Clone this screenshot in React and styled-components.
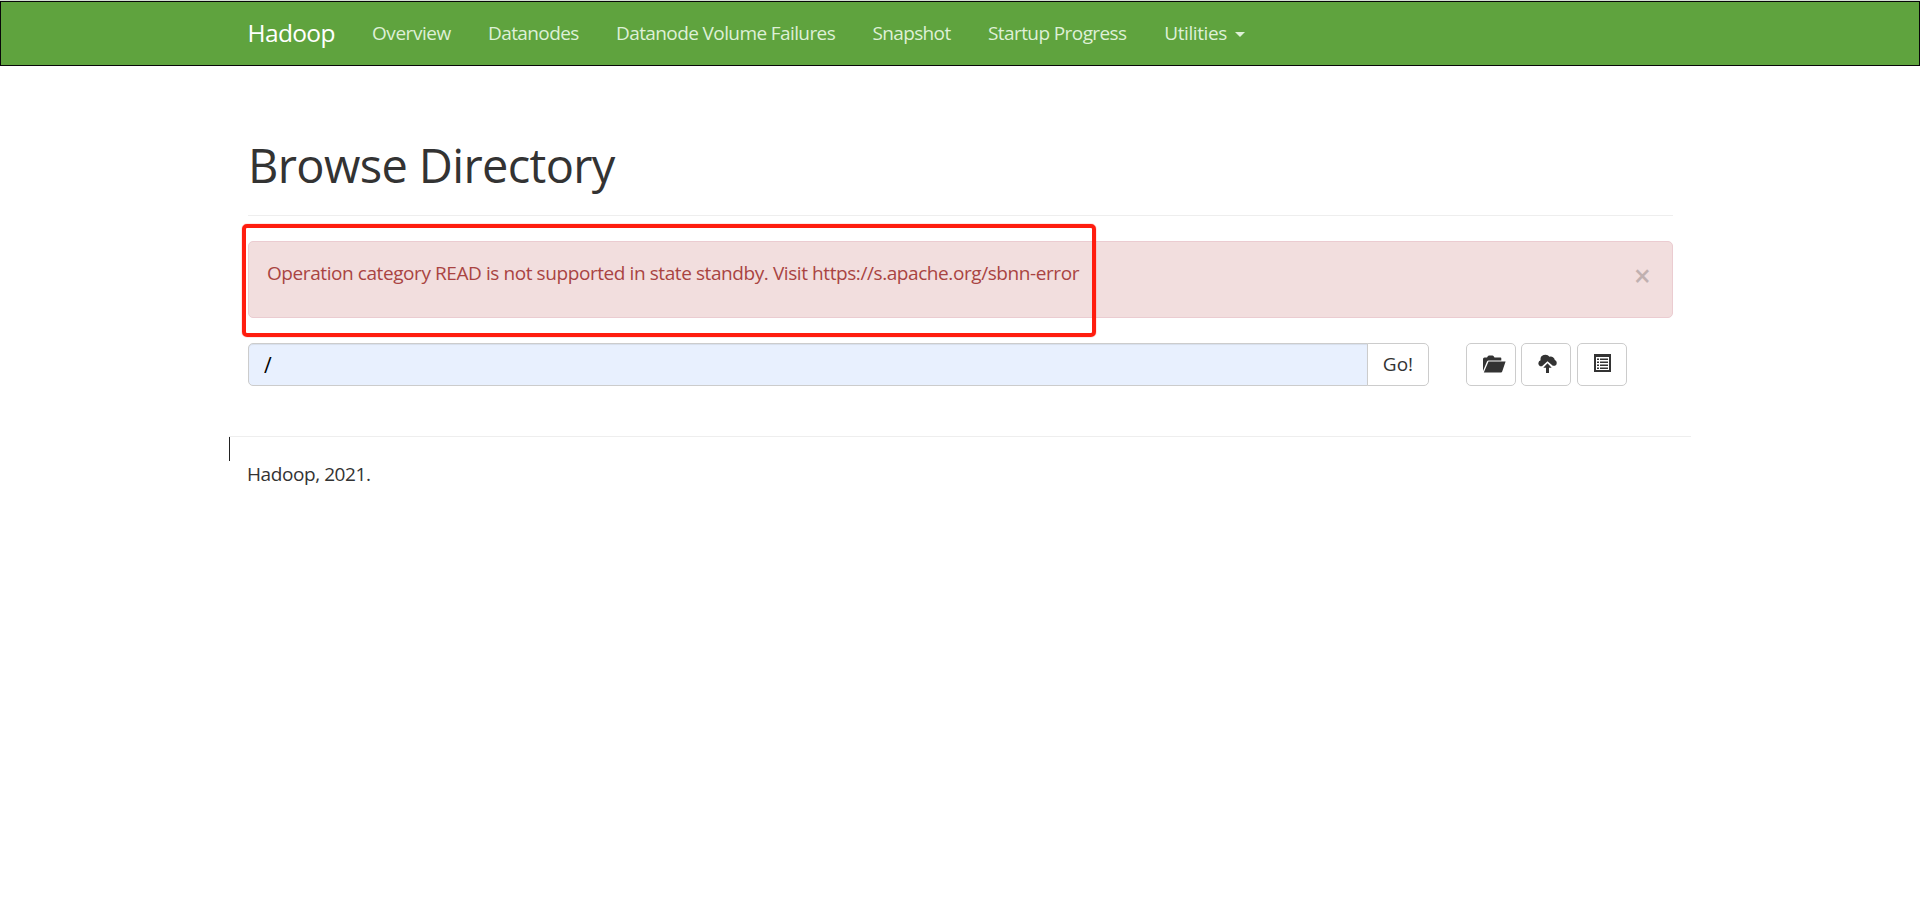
import React from 'react';
import styled, { createGlobalStyle } from 'styled-components';

const GlobalStyle = createGlobalStyle`
  *, *::before, *::after { box-sizing: border-box; }
  body {
    margin: 0;
    background: #fff;
    color: #333;
    font: 19px/25px "Open Sans", sans-serif;
    letter-spacing: -0.42px;
    overflow: hidden;
  }
`;

const Page = styled.div`
  position: relative;
  min-height: 902px;
`;

const Navbar = styled.header`
  height: 66px;
  border-top: 1px solid #d3dfd3;
  background: #5fa33e;
`;

const NavFrame = styled.div`
  height: 65px;
  border: 1px solid #080808;
`;

const Container = styled.div`
  width: 1462px;
  margin: 0 auto;
`;

const NavRow = styled.nav`
  display: flex;
  align-items: center;
  height: 62px;
  padding-left: 18.5px;
`;

const Brand = styled.a`
  width: 124.5px;
  padding-bottom: 2px;
  color: #fff;
  font-size: 24.5px;
  letter-spacing: -0.65px;
`;

const NavLink = styled.a`
  display: flex;
  align-items: center;
  width: ${(p) => p.$width}px;
  color: #def0d6;
  letter-spacing: ${(p) => p.$tracking}px;
  white-space: nowrap;
`;

const Caret = styled.span`
  margin: 2px 0 0 8.5px;
  border-top: 5px solid currentColor;
  border-left: 5px solid transparent;
  border-right: 5px solid transparent;
`;

const Main = styled.main`
  padding: 72px 18px 0 19px;
`;

const Title = styled.h1`
  margin: 0;
  height: 78px;
  border-bottom: 1px solid #eee;
  font-size: 47px;
  font-weight: 400;
  line-height: 55px;
  letter-spacing: -0.65px;
`;

const Alert = styled.div`
  display: flex;
  justify-content: space-between;
  height: 77px;
  margin-top: 25px;
  padding: 18px 21px 0 18px;
  border: 1px solid #ebccd1;
  border-radius: 5px;
  background: #f2dede;
  color: #a94442;
`;

const AlertText = styled.span`
  line-height: 27px;
`;

const Close = styled.button`
  height: 31px;
  padding: 0;
  border: 0;
  background: none;
  color: #000;
  opacity: 0.2;
  font: 600 30px/31px "Open Sans", sans-serif;
`;

const Toolbar = styled.div`
  display: flex;
  height: 43px;
  margin-top: 25px;
`;

const PathInput = styled.input`
  width: 1120px;
  padding: 0 15px;
  border: 1px solid #ccc;
  border-radius: 5px 0 0 5px;
  background: #e8f0fe;
  box-shadow: inset 0 1px 1px rgba(0, 0, 0, 0.075);
  color: #000;
  font: 21px "Open Sans", sans-serif;
  outline: none;
`;

const Button = styled.button`
  display: flex;
  align-items: center;
  justify-content: center;
  padding: 0;
  border: 1px solid #ccc;
  border-radius: 5px;
  background: #fff;
  color: #333;
  font: inherit;
`;

const GoButton = styled(Button)`
  width: 62px;
  margin-left: -1px;
  border-radius: 0 5px 5px 0;
`;

const Actions = styled.div`
  display: flex;
  gap: 5px;
  margin-left: 37px;
`;

const IconButton = styled(Button)`
  width: 50px;
  margin-right: ${(p) => p.$after || 0}px;
  padding-left: ${(p) => p.$shift || 0}px;
  padding-bottom: ${(p) => p.$lift || 2}px;
`;

const Footer = styled.footer`
  display: flex;
  height: 60px;
  margin-top: 50px;
  border-top: 1px solid #eee;
`;

const FooterMark = styled.span`
  width: 1px;
  height: 24px;
  background: #222;
`;

const FooterText = styled.p`
  margin: 25px 0 0 17px;
`;

const Highlight = styled.div`
  position: absolute;
  left: 241.5px;
  top: 223.5px;
  width: 854px;
  height: 113px;
  border: 4px solid #ff1d0f;
  border-radius: 5px;
  box-shadow: 0 0 1px #ff1d0f;
  pointer-events: none;
`;

const links = [
  ['Overview', 116, -0.44],
  ['Datanodes', 128, -0.6],
  ['Datanode Volume Failures', 256.5, -0.6],
  ['Snapshot', 115.5, -0.64],
  ['Startup Progress', 176.2, -0.59],
];

const FolderIcon = () => (
  <svg width="23" height="18" viewBox="0 0 23 18" fill="currentColor">
    <path d="M0 16V4q0-1.500 1.500-1.500H4L5 1q.4-.6 1-.6h3.500q.6 0 1 .6l1 1.500h6q.8 0 .8.8V5.500H5.500Q4.500 5.500 4 6.500Z" />
    <path d="M5.500 6.500H22.600L19.200 16.500q-.3 1-1.200 1H.8Z" />
  </svg>
);

const UploadIcon = () => (
  <svg width="19" height="19" viewBox="0 0 19 19" fill="currentColor">
    <path d="M2 12.300A3.400 3.400 0 0 1 2.600 6.200A4.900 4.600 0 0 1 11.500 2.800A4.100 3.700 0 0 1 16.800 6A3.200 3.200 0 0 1 17 11.800H14.800L9.500 7.200L4 12.300Z" />
    <path d="M9.500 9.200L13.700 13.700H11V19H8V13.700H5.300Z" />
  </svg>
);

const ListIcon = () => (
  <svg width="17" height="18" viewBox="0 0 17 18" fill="currentColor">
    <path fillRule="evenodd" d="M0 0H17V18H0ZM2 3V16H15V3Z" />
    <path d="M3 4.500h2v1.500H3zM6 4.500h8v1.500H6zM3 7.500h2v1.500H3zM6 7.500h8v1.500H6zM3 10.500h2v1.500H3zM6 10.500h8v1.500H6zM3 13.500h2v1.500H3zM6 13.500h8v1.500H6z" />
  </svg>
);

export default function App() {
  return (
    <Page>
      <GlobalStyle />
      <Navbar>
        <NavFrame>
          <Container>
            <NavRow>
              <Brand>Hadoop</Brand>
              {links.map(([label, width, tracking]) => (
                <NavLink key={label} $width={width} $tracking={tracking}>{label}</NavLink>
              ))}
              <NavLink $width={90} $tracking={-0.4}>Utilities<Caret /></NavLink>
            </NavRow>
          </Container>
        </NavFrame>
      </Navbar>
      <Container>
        <Main>
          <Title>Browse Directory</Title>
          <Alert role="alert">
            <AlertText>Operation category READ is not supported in state standby. Visit https://s.apache.org/sbnn-error</AlertText>
            <Close aria-label="Close">×</Close>
          </Alert>
          <Toolbar>
            <PathInput defaultValue="/" />
            <GoButton>Go!</GoButton>
            <Actions>
              <IconButton aria-label="Create directory" $shift={6}><FolderIcon /></IconButton>
              <IconButton aria-label="Upload files" $after={1} $shift={2}><UploadIcon /></IconButton>
              <IconButton aria-label="Cut and paste" $shift={1} $lift={4}><ListIcon /></IconButton>
            </Actions>
          </Toolbar>
        </Main>
        <Footer>
          <FooterMark />
          <FooterText>Hadoop, 2021.</FooterText>
        </Footer>
      </Container>
      <Highlight />
    </Page>
  );
}
